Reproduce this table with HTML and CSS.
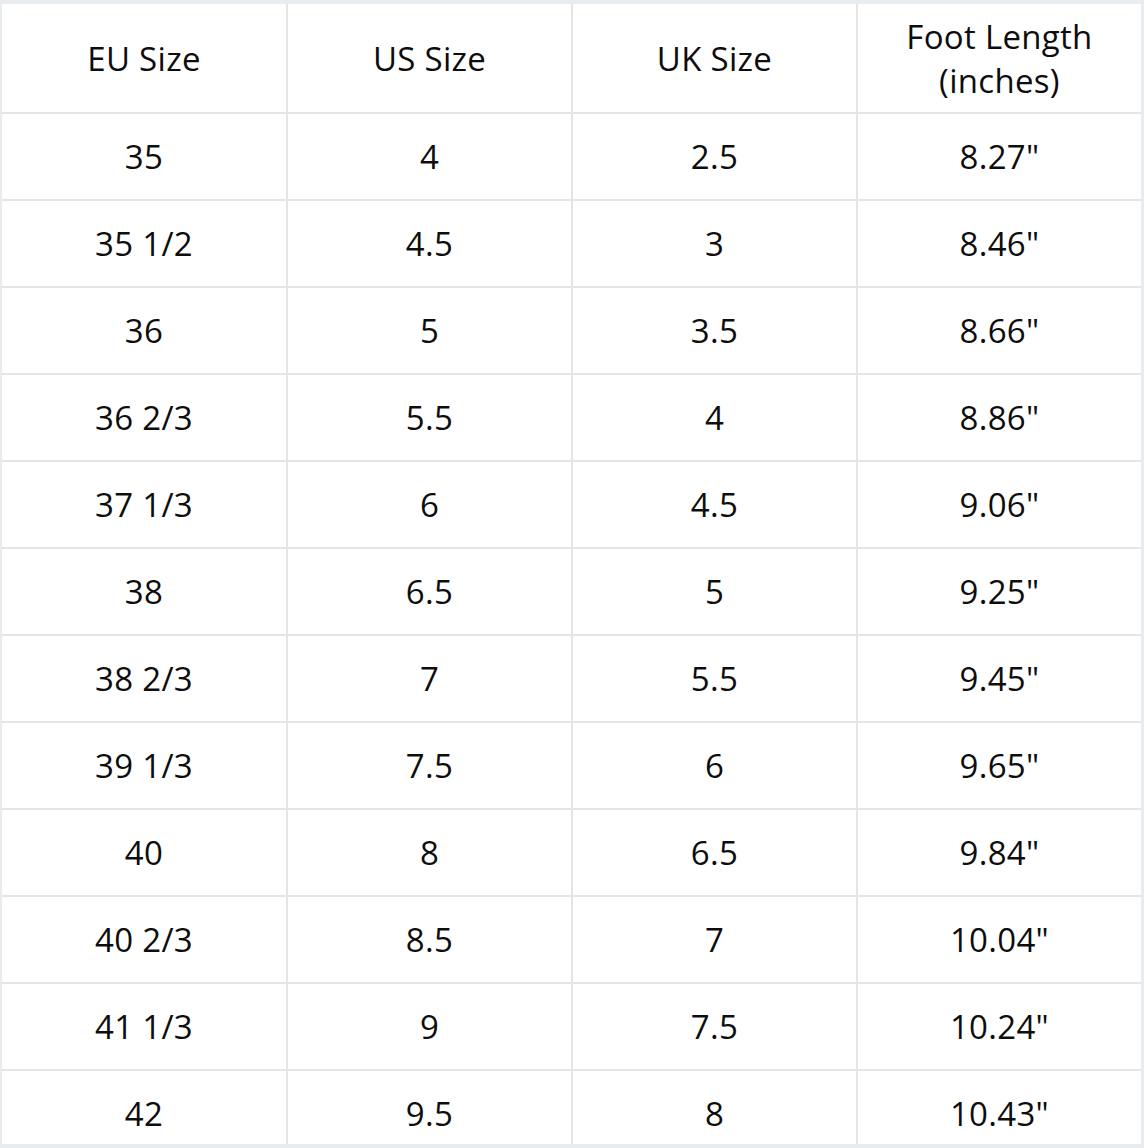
FILE: index.html
```html
<!DOCTYPE html>
<html lang="en">
<head>
<meta charset="utf-8">
<title>Shoe Size Chart</title>
<link rel="stylesheet" href="styles.css">
</head>
<body>
<div class="chart">
  <div class="cell head">EU Size</div>
  <div class="cell head">US Size</div>
  <div class="cell head">UK Size</div>
  <div class="cell head">Foot Length<br>(inches)</div>

  <div class="cell">35</div><div class="cell">4</div><div class="cell">2.5</div><div class="cell">8.27"</div>
  <div class="cell">35 1/2</div><div class="cell">4.5</div><div class="cell">3</div><div class="cell">8.46"</div>
  <div class="cell">36</div><div class="cell">5</div><div class="cell">3.5</div><div class="cell">8.66"</div>
  <div class="cell">36 2/3</div><div class="cell">5.5</div><div class="cell">4</div><div class="cell">8.86"</div>
  <div class="cell">37 1/3</div><div class="cell">6</div><div class="cell">4.5</div><div class="cell">9.06"</div>
  <div class="cell">38</div><div class="cell">6.5</div><div class="cell">5</div><div class="cell">9.25"</div>
  <div class="cell">38 2/3</div><div class="cell">7</div><div class="cell">5.5</div><div class="cell">9.45"</div>
  <div class="cell">39 1/3</div><div class="cell">7.5</div><div class="cell">6</div><div class="cell">9.65"</div>
  <div class="cell">40</div><div class="cell">8</div><div class="cell">6.5</div><div class="cell">9.84"</div>
  <div class="cell">40 2/3</div><div class="cell">8.5</div><div class="cell">7</div><div class="cell">10.04"</div>
  <div class="cell">41 1/3</div><div class="cell">9</div><div class="cell">7.5</div><div class="cell">10.24"</div>
  <div class="cell last">42</div><div class="cell last">9.5</div><div class="cell last">8</div><div class="cell last">10.43"</div>
</div>
</body>
</html>
```
FILE: styles.css
```css
html, body {
  margin: 0;
  padding: 0;
}
body {
  background: #e9ecef;
  width: 1144px;
  height: 1148px;
  overflow: hidden;
  font-family: "Open Sans", "Liberation Sans", sans-serif;
  color: #0d0d0d;
}
.chart {
  margin: 4px 0 0 2px;
  width: 1139px;
  display: grid;
  grid-template-columns: 284px 283px 283px 283px;
  grid-template-rows: 108px repeat(11, 85px) 73px;
  gap: 2px;
  background: #e5e5e5;
}
.cell {
  background: #ffffff;
  display: flex;
  align-items: center;
  justify-content: center;
  text-align: center;
  font-size: 33px;
  line-height: 44px;
  letter-spacing: 0.3px;
}
.head {
  padding-top: 1px;
}
.last {
  padding-top: 12px;
  box-sizing: border-box;
}
```
